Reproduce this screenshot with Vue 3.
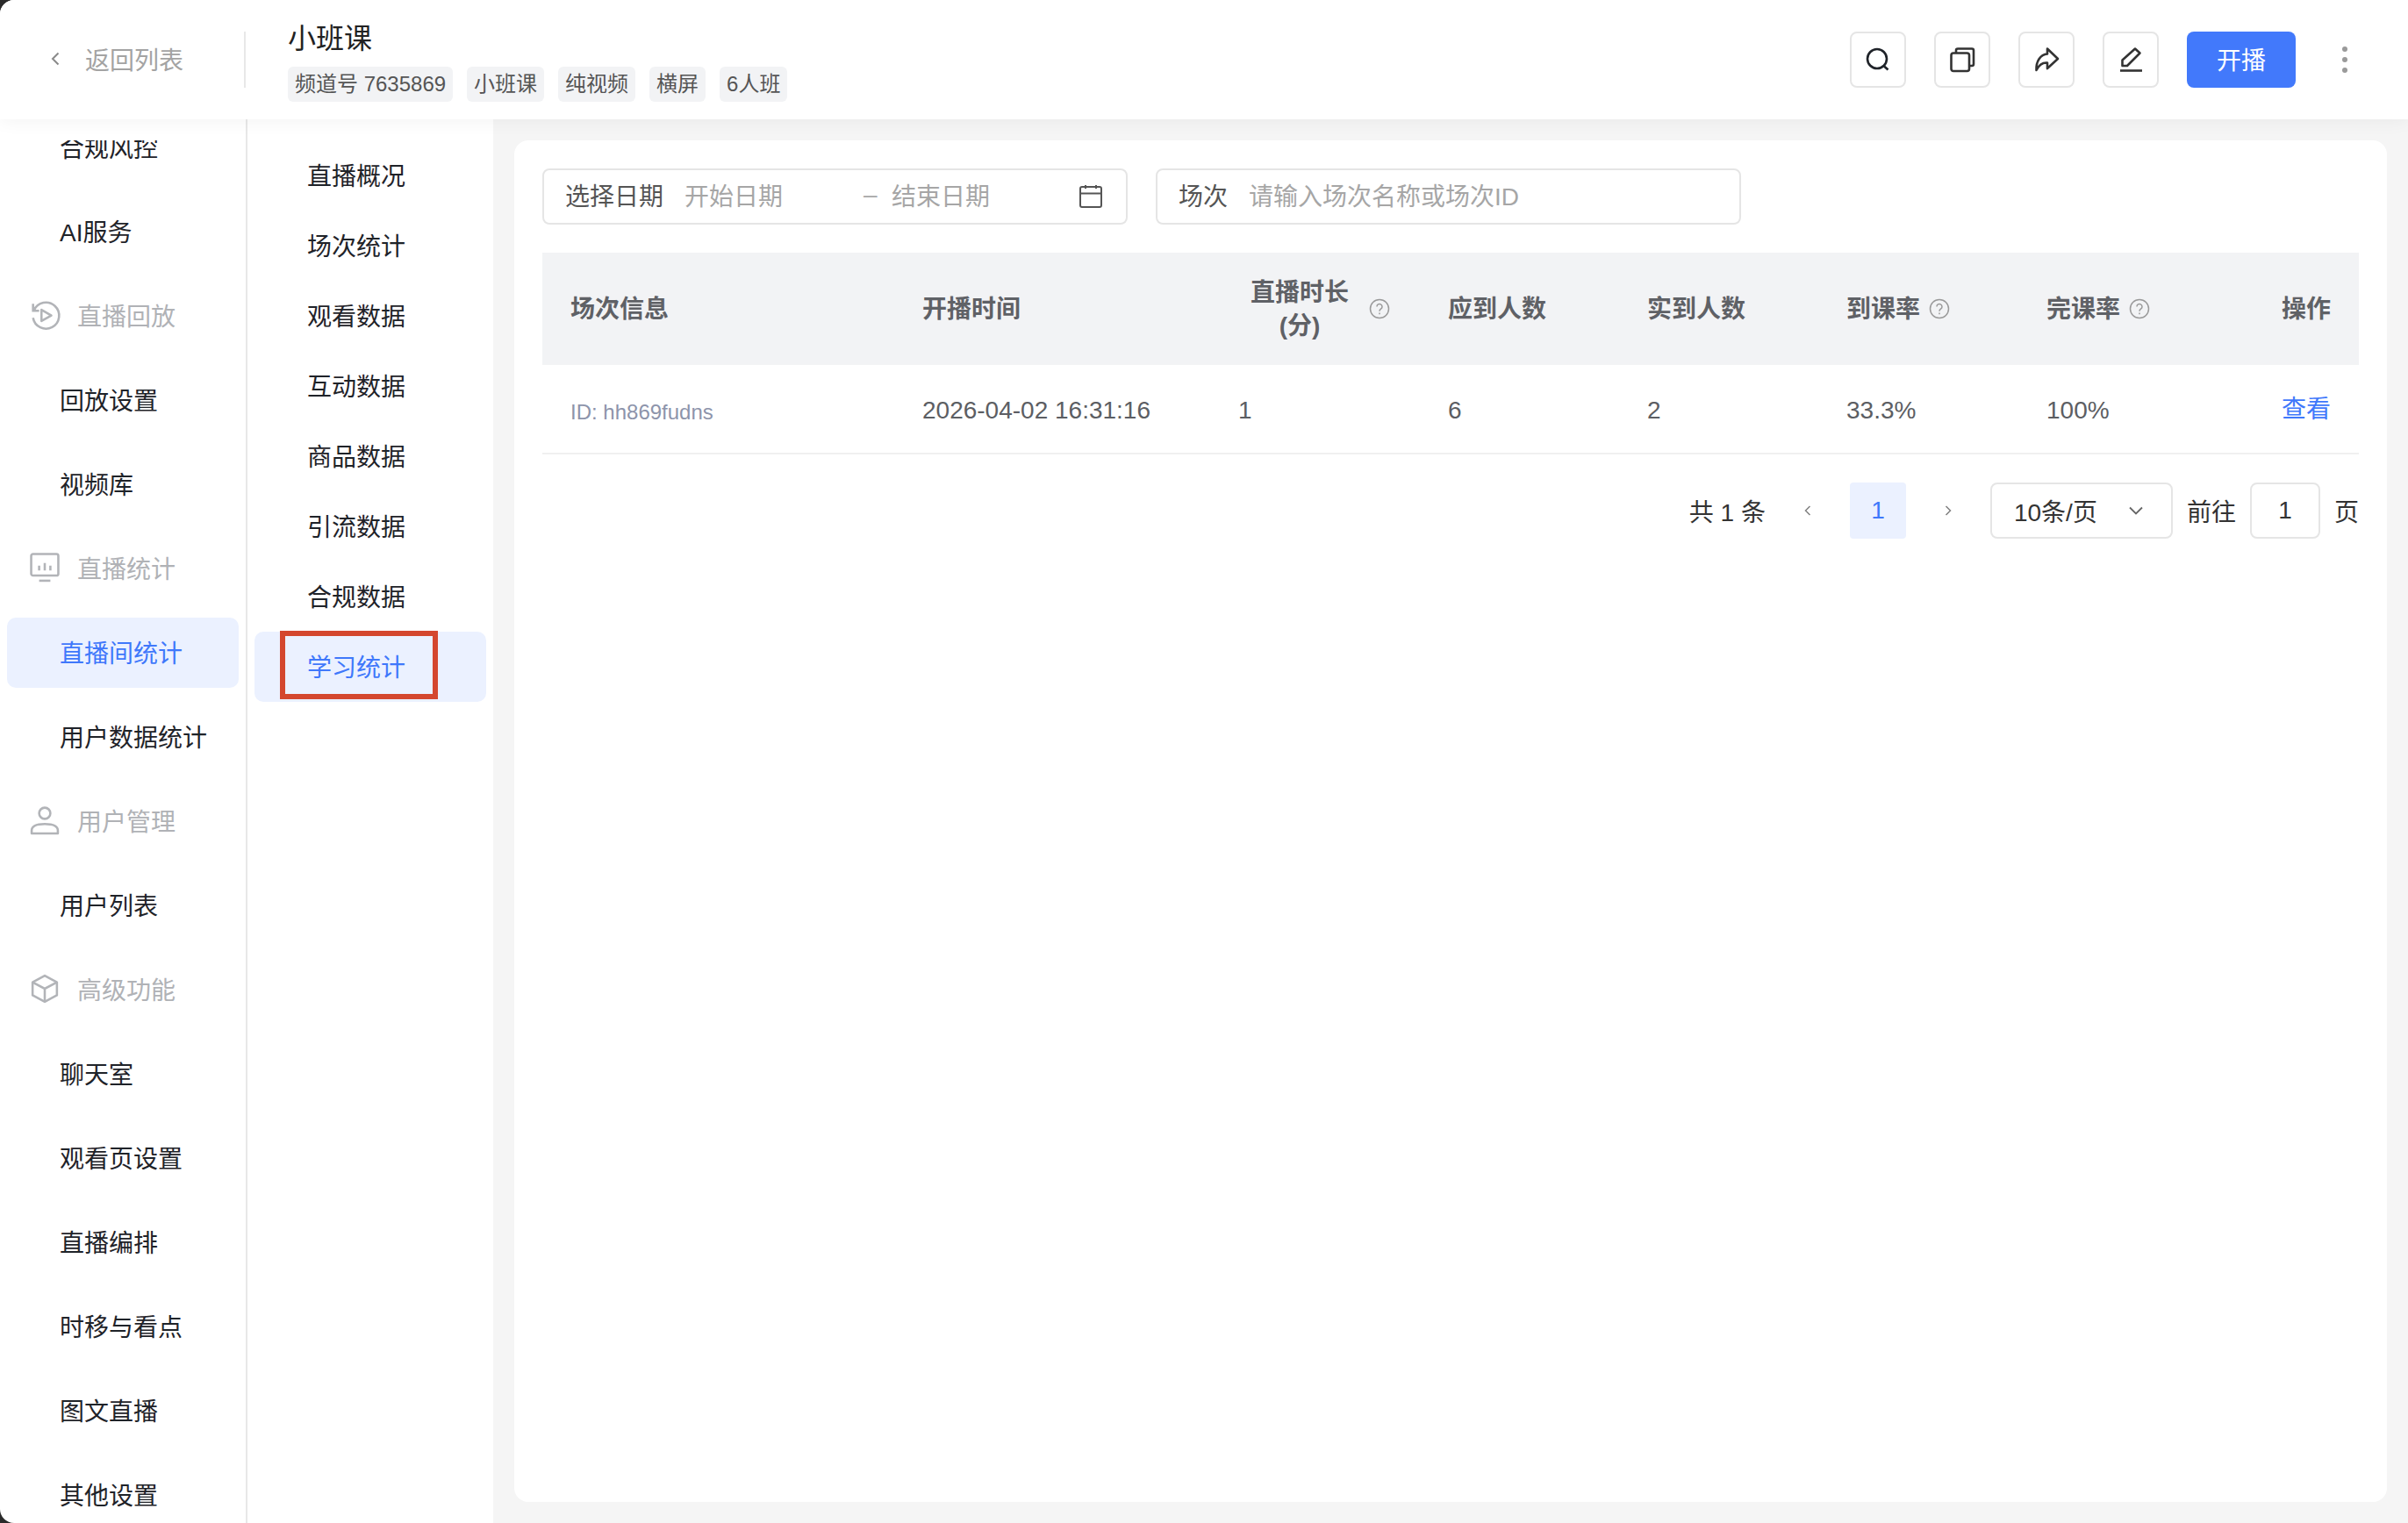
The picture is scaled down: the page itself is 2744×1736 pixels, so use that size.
<script setup>
// 左侧两级菜单 + 学习统计表格
const MENU = [
  { label: "合规风控" },
  { label: "AI服务" },
  { label: "直播回放", icon: "replay" },
  { label: "回放设置" },
  { label: "视频库" },
  { label: "直播统计", icon: "monitor" },
  { label: "直播间统计", active: true },
  { label: "用户数据统计" },
  { label: "用户管理", icon: "user" },
  { label: "用户列表" },
  { label: "高级功能", icon: "cube" },
  { label: "聊天室" },
  { label: "观看页设置" },
  { label: "直播编排" },
  { label: "时移与看点" },
  { label: "图文直播" },
  { label: "其他设置" }
];
const SUB_MENU = ["直播概况", "场次统计", "观看数据", "互动数据", "商品数据", "引流数据", "合规数据", "学习统计"];
const TAGS = ["频道号 7635869", "小班课", "纯视频", "横屏", "6人班"];
const COLUMNS = [
  { label: "场次信息" },
  { label: "开播时间" },
  { label: "直播时长", sub: "(分)", help: true },
  { label: "应到人数" },
  { label: "实到人数" },
  { label: "到课率", help: true },
  { label: "完课率", help: true }
];
const ROW = ["2026-04-02 16:31:16", "1", "6", "2", "33.3%", "100%"];
</script>

<template>
  <div class="app">
    <header class="topbar">
      <div class="back">
        <svg class="back-arrow" width="12" height="18" viewBox="0 0 12 18" fill="none">
          <path d="M9.5 2.5 3 9l6.5 6.5" stroke="#8a8a8a" stroke-width="2" />
        </svg>
        <span>返回列表</span>
      </div>
      <div class="title-block">
        <div class="title">小班课</div>
        <div class="tags">
          <span v-for="t in TAGS" :key="t" class="tag">{{ t }}</span>
        </div>
      </div>
      <div class="actions">
        <button class="icon-btn">
          <svg width="32" height="32" viewBox="0 0 32 32" fill="none" stroke="#1f2329" stroke-width="2.6">
            <circle cx="15" cy="15" r="11" />
            <path d="M23 23.5 27.5 27.5" />
          </svg>
        </button>
        <button class="icon-btn">
          <svg width="32" height="32" viewBox="0 0 32 32" fill="none" stroke="#333" stroke-width="2.6" stroke-linejoin="round">
            <rect x="3.5" y="8.5" width="20.5" height="20.5" rx="2.5" />
            <path d="M9 8V5.5a2 2 0 0 1 2-2h16a2 2 0 0 1 2 2V21a2 2 0 0 1-2 2h-3" />
          </svg>
        </button>
        <button class="icon-btn">
          <svg width="32" height="32" viewBox="0 0 32 32" fill="none" stroke="#333" stroke-width="2.6" stroke-linejoin="round">
            <path d="M17 3.5 29 15 17 26v-6.500C12 19 7.500 22 4.500 28 4 18 9 10 17 9.500Z" />
          </svg>
        </button>
        <button class="icon-btn">
          <svg width="32" height="32" viewBox="0 0 32 32" fill="none" stroke="#333" stroke-width="2.6">
            <path d="M6.500 23v-6.500L21 3.500l5.500 5L12 23Z" stroke-linejoin="round" />
            <path d="M4 28.500h25" />
          </svg>
        </button>
        <button class="start-btn">开播</button>
        <div class="more"><i></i><i></i><i></i></div>
      </div>
    </header>

    <div class="body">
      <aside class="side">
        <div class="side-scroll">
          <div
            v-for="m in MENU"
            :key="m.label"
            class="side-item"
            :class="{ 'is-group': m.icon, 'is-active': m.active }"
          >
            <svg v-if="m.icon" class="group-icon" width="32" height="32" viewBox="1 1 30 30" fill="none" stroke="#b2b4b8" stroke-width="2.400">
              <template v-if="m.icon === 'replay'">
                <path d="M3.500 4v7.500H10" />
                <path d="M4.500 11a14 14 0 1 1-1 8" />
                <path d="M12.500 10.500 23 16.500l-10.500 6Z" stroke-linejoin="round" />
              </template>
              <template v-else-if="m.icon === 'monitor'">
                <rect x="1.500" y="1.500" width="29" height="23" rx="2" />
                <path d="M10 14v5M16 11v8M22 14v5" />
                <path d="M10 30h12" />
              </template>
              <template v-else-if="m.icon === 'user'">
                <circle cx="16" cy="8.500" r="6" />
                <path d="M2 30v-3c0-5 5-7 14-7s14 2 14 7v3Z" stroke-linejoin="round" />
              </template>
              <template v-else>
                <path d="M16 2 29 9v14l-13 7-13-7V9Z" stroke-linejoin="round" />
                <path d="M3 9l13 7 13-7M16 16v14" />
              </template>
            </svg>
            <span>{{ m.label }}</span>
          </div>
        </div>
      </aside>

      <nav class="sub">
        <div
          v-for="s in SUB_MENU"
          :key="s"
          class="sub-item"
          :class="{ 'is-active': s === '学习统计' }"
        >
          {{ s }}
          <div v-if="s === '学习统计'" class="mark"></div>
        </div>
      </nav>

      <main class="main">
        <section class="card">
          <div class="filters">
            <div class="field">
              <span class="field-label">选择日期</span>
              <span class="ph ph-start">开始日期</span>
              <span class="ph ph-dash">–</span>
              <span class="ph ph-end">结束日期</span>
              <svg width="28" height="28" viewBox="0 0 28 28" fill="none" stroke="#555" stroke-width="2">
                <rect x="2" y="3" width="24" height="23" rx="2" />
                <path d="M2 10.500h24M8 1v4M20 1v4" />
              </svg>
            </div>
            <div class="field">
              <span class="field-label field-label-short">场次</span>
              <span class="ph">请输入场次名称或场次ID</span>
            </div>
          </div>

          <div class="grid grid-head">
            <div v-for="c in COLUMNS" :key="c.label" class="th" :class="{ 'th-wide': c.sub }">
              <div class="th-text">
                <div>{{ c.label }}</div>
                <div v-if="c.sub">{{ c.sub }}</div>
              </div>
              <svg v-if="c.help" class="help" width="24" height="24" viewBox="0 0 24 24" fill="none" stroke="#9a9a9a" stroke-width="1.500">
                <circle cx="12" cy="12" r="10.500" />
                <path d="M9 9.500a3 3 0 1 1 4.800 2.400c-1.100.8-1.800 1.400-1.800 2.800" />
                <path d="M12 16.500v1.800" />
              </svg>
            </div>
            <div class="th th-right"><div class="th-text">操作</div></div>
          </div>

          <div class="grid grid-row">
            <div class="td td-id">ID: hh869fudns</div>
            <div v-for="(v, i) in ROW" :key="i" class="td">{{ v }}</div>
            <div class="td td-right">查看</div>
          </div>

          <div class="pager">
            <span>共 1 条</span>
            <span class="page-arrow">
              <svg width="12" height="16" viewBox="0 0 12 16" fill="none">
                <path d="M8.500 3 3.500 8l5 5" stroke="#808080" stroke-width="1.500" />
              </svg>
            </span>
            <span class="page-num">1</span>
            <span class="page-arrow">
              <svg width="12" height="16" viewBox="0 0 12 16" fill="none">
                <path d="M3.500 3l5 5-5 5" stroke="#808080" stroke-width="1.500" />
              </svg>
            </span>
            <div class="page-size">
              <span>10条/页</span>
              <svg width="18" height="12" viewBox="0 0 18 12" fill="none">
                <path d="M2 2.500l7 7 7-7" stroke="#666" stroke-width="1.800" />
              </svg>
            </div>
            <span>前往</span>
            <div class="page-jump">1</div>
            <span>页</span>
          </div>
        </section>
      </main>
    </div>
  </div>
</template>

<style>
html,
body {
  margin: 0;
  background: #2a2a2a;
}
</style>

<style scoped>
.app {
  width: 2744px;
  height: 1736px;
  display: flex;
  flex-direction: column;
  overflow: hidden;
  background: #fff;
  border-radius: 16px 0 0 16px;
  font-family: "Liberation Sans", "Noto Sans CJK SC", sans-serif;
  font-size: 28px;
  color: #1f2329;
}

.topbar {
  position: relative;
  z-index: 2;
  flex: none;
  height: 136px;
  display: flex;
  align-items: center;
  background: #fff;
  box-shadow: 0 2px 20px rgba(0, 0, 0, 0.05);
}
.back {
  width: 280px;
  height: 64px;
  box-sizing: border-box;
  padding: 0 0 3px 57px;
  display: flex;
  align-items: center;
  gap: 28px;
  border-right: 2px solid #e8e8e8;
  color: #a3a3a3;
}
.title-block {
  align-self: flex-start;
  margin: 22px 0 0 48px;
  display: flex;
  flex-direction: column;
}
.title {
  font-size: 32px;
  line-height: 44px;
  color: #222;
}
.tags {
  display: flex;
  gap: 16px;
  margin-top: 10px;
}
.tag {
  height: 40px;
  line-height: 40px;
  padding: 0 8px;
  font-size: 24px;
  color: #555;
  background: #f2f3f5;
  border-radius: 6px;
}
.actions {
  margin-left: auto;
  margin-right: 69px;
  display: flex;
  align-items: center;
  gap: 32px;
}
.icon-btn {
  width: 64px;
  height: 64px;
  padding: 0;
  display: flex;
  align-items: center;
  justify-content: center;
  background: #fff;
  border: 2px solid #e5e5e5;
  border-radius: 8px;
}
.start-btn {
  width: 124px;
  height: 64px;
  padding: 0 0 3px;
  border: 0;
  border-radius: 8px;
  background: #4279fb;
  color: #fff;
  font-family: inherit;
  font-size: 28px;
}
.more {
  margin-left: 21px;
  display: flex;
  flex-direction: column;
  gap: 6px;
}
.more i {
  width: 6px;
  height: 6px;
  border-radius: 50%;
  background: #9a9a9a;
}

.body {
  flex: 1;
  min-height: 0;
  display: flex;
}

.side {
  flex: none;
  width: 282px;
  box-sizing: border-box;
  padding-top: 24px;
  border-right: 2px solid #e8e8e8;
  display: flex;
}
.side-scroll {
  flex: 1;
  overflow: hidden;
  display: flex;
  flex-direction: column;
  gap: 16px;
}
.side-item {
  flex: none;
  width: 264px;
  height: 80px;
  margin-left: 8px;
  box-sizing: border-box;
  padding: 0 0 3px 60px;
  display: flex;
  align-items: center;
  border-radius: 10px;
  color: #1f2329;
}
.side-item:first-child {
  margin-top: -32px;
}
.side-item.is-group {
  padding-left: 27px;
  gap: 21px;
  color: #b0b2b6;
}
.side-item.is-active {
  background: #ebf1ff;
  color: #3f78fb;
}
.group-icon {
  flex: none;
  overflow: visible;
}

.sub {
  flex: none;
  width: 280px;
  box-sizing: border-box;
  padding-top: 24px;
}
.sub-item {
  position: relative;
  height: 80px;
  margin: 0 8px;
  padding: 0 0 3px 60px;
  box-sizing: border-box;
  display: flex;
  align-items: center;
  border-radius: 10px;
}
.sub-item.is-active {
  background: #ebf1ff;
  color: #3f78fb;
}
.mark {
  position: absolute;
  left: 29px;
  top: -1px;
  width: 180px;
  height: 78px;
  box-sizing: border-box;
  border: 6px solid #d4472e;
}

.main {
  flex: 1;
  min-width: 0;
  display: flex;
  padding: 24px;
  background: #f5f5f5;
}
.card {
  flex: 1;
  min-width: 0;
  box-sizing: border-box;
  padding: 32px 32px 0;
  background: #fff;
  border-radius: 16px;
}

.filters {
  display: flex;
  gap: 32px;
}
.field {
  width: 667px;
  height: 64px;
  box-sizing: border-box;
  padding: 0 26px 4px 24px;
  display: flex;
  align-items: center;
  border: 2px solid #e5e5e5;
  border-radius: 8px;
}
.field svg {
  margin-top: 4px;
}
.field-label {
  width: 136px;
  flex: none;
  color: #555;
}
.field-label-short {
  width: 80px;
}
.ph {
  color: #a6a6a6;
}
.ph-start {
  width: 204px;
}
.ph-dash {
  width: 32px;
}
.ph-end {
  flex: 1;
}

.grid {
  display: grid;
  grid-template-columns: 401px 360px 239px 227px 227px 228px 200px 188px;
  width: 2070px;
}
.grid-head {
  margin-top: 32px;
  height: 128px;
  background: #f2f3f5;
}
.th {
  box-sizing: border-box;
  padding-left: 32px;
  display: flex;
  align-items: center;
  gap: 10px;
  font-weight: 600;
  color: #5f6166;
}
.th-wide {
  padding-left: 46px;
  gap: 23px;
}
.th-text {
  padding-top: 2px;
  text-align: center;
  line-height: 38px;
}
.th-right {
  padding: 0 32px 0 0;
  justify-content: flex-end;
}
.help {
  flex: none;
}
.grid-row {
  height: 102px;
  box-sizing: border-box;
  border-bottom: 2px solid #f0f0f0;
}
.td {
  box-sizing: border-box;
  padding: 3px 0 0 32px;
  display: flex;
  align-items: center;
  color: #5c5e63;
}
.td-id {
  padding-top: 8px;
  font-size: 24px;
  color: #8d94ab;
}
.td-right {
  padding: 0 32px 4px 0;
  justify-content: flex-end;
  color: #3f78fb;
}

.pager {
  margin-top: 32px;
  width: 2070px;
  height: 64px;
  display: flex;
  align-items: center;
  justify-content: flex-end;
  gap: 16px;
  color: #333;
}
.page-arrow {
  width: 64px;
  height: 64px;
  display: flex;
  align-items: center;
  justify-content: center;
}
.page-num {
  width: 64px;
  height: 64px;
  line-height: 64px;
  text-align: center;
  background: #ebf1ff;
  color: #3f78fb;
  border-radius: 4px;
}
.page-size {
  width: 208px;
  height: 64px;
  box-sizing: border-box;
  padding: 0 31px 0 25px;
  display: flex;
  align-items: center;
  justify-content: space-between;
  border: 2px solid #e5e5e5;
  border-radius: 8px;
}
.page-jump {
  width: 80px;
  height: 64px;
  line-height: 60px;
  box-sizing: border-box;
  text-align: center;
  border: 2px solid #e5e5e5;
  border-radius: 8px;
}
</style>
